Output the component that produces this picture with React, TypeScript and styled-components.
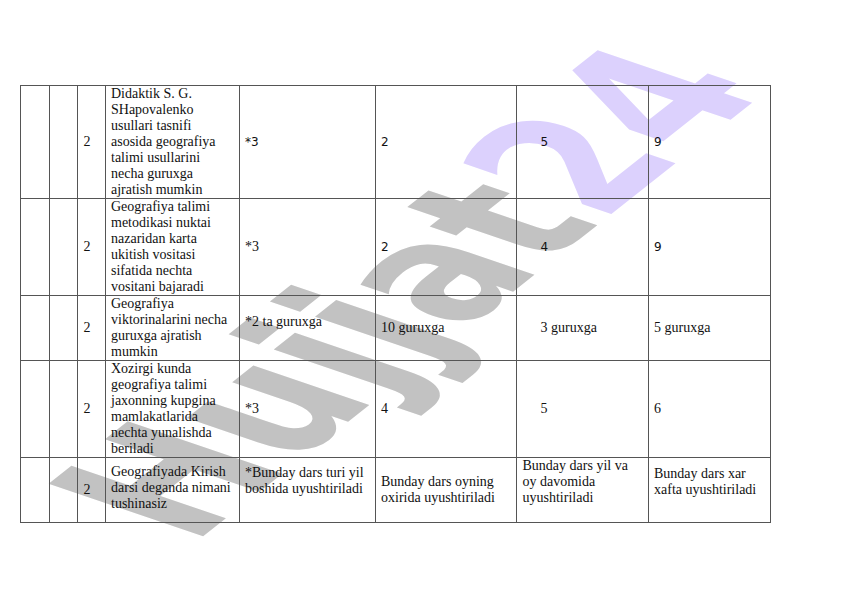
import React from "react";
import styled, { createGlobalStyle } from "styled-components";

type Answer = {
  lines: string[];
  sans?: boolean;
  indent?: number;
  lift?: number;
};

type Question = {
  height: number;
  lines: string[];
  lift?: number;
  answers: Answer[];
};

const widths = [29, 28, 27.5, 134, 136, 141.5, 131.5, 122.5];

const rows: Question[] = [
  {
    height: 112,
    lines: [
      "Didaktik S. G.",
      "SHapovalenko",
      "usullari tasnifi",
      "asosida geografiya",
      "talimi usullarini",
      "necha guruxga",
      "ajratish mumkin"
    ],
    answers: [
      { lines: ["*3"], sans: true },
      { lines: ["2"], sans: true },
      { lines: ["5"], sans: true, indent: 18 },
      { lines: ["9"], sans: true }
    ]
  },
  {
    height: 97,
    lines: [
      "Geografiya talimi",
      "metodikasi nuktai",
      "nazaridan karta",
      "ukitish vositasi",
      "sifatida nechta",
      "vositani bajaradi"
    ],
    answers: [
      { lines: ["*3"] },
      { lines: ["2"], sans: true },
      { lines: ["4"], sans: true, indent: 18 },
      { lines: ["9"], sans: true }
    ]
  },
  {
    height: 63.5,
    lines: ["Geografiya", "viktorinalarini necha", "guruxga ajratish", "mumkin"],
    answers: [
      { lines: ["*2 ta guruxga"], lift: 6 },
      { lines: ["10 guruxga"] },
      { lines: ["3 guruxga"], indent: 18 },
      { lines: ["5 guruxga"] }
    ]
  },
  {
    height: 96,
    lines: [
      "Xozirgi kunda",
      "geografiya talimi",
      "jaxonning kupgina",
      "mamlakatlarida",
      "nechta yunalishda",
      "beriladi"
    ],
    answers: [
      { lines: ["*3"] },
      { lines: ["4"] },
      { lines: ["5"], indent: 18 },
      { lines: ["6"] }
    ]
  },
  {
    height: 64,
    lines: ["Geografiyada Kirish", "darsi deganda nimani", "tushinasiz"],
    lift: 2,
    answers: [
      { lines: ["*Bunday dars turi yil", "boshida uyushtiriladi"], lift: 9 },
      { lines: ["Bunday dars oyning", "oxirida uyushtiriladi"] },
      { lines: ["Bunday dars yil va", "oy davomida", "uyushtiriladi"], lift: 8 },
      { lines: ["Bunday dars xar", "xafta uyushtiriladi"], lift: 8 }
    ]
  }
];

const GlobalStyle = createGlobalStyle`
  body {
    margin: 0;
    background: #ffffff;
  }
`;

const Page = styled.div`
  position: relative;
  width: 842px;
  height: 596px;
  overflow: hidden;
  box-sizing: border-box;
  padding: 85px 0 0 20px;
  background: #ffffff;
`;

const Watermark = styled.svg`
  position: absolute;
  left: 0;
  top: 0;
  z-index: 0;
  pointer-events: none;
`;

const Sheet = styled.table`
  position: relative;
  z-index: 1;
  width: 750px;
  border-collapse: collapse;
  table-layout: fixed;
`;

const Row = styled.tr<{ $height: number }>`
  height: ${p => p.$height}px;
`;

const Cell = styled.td<{ $sans?: boolean; $indent?: number; $lift?: number }>`
  border: 1px solid #555555;
  padding: 0 4px ${p => (p.$lift ? p.$lift * 2 : 0)}px
    ${p => 5.5 + (p.$indent || 0)}px;
  vertical-align: middle;
  color: #111111;
  font-family: ${p =>
    p.$sans ? '"DejaVu Sans", sans-serif' : '"Liberation Serif", serif'};
  font-size: ${p => (p.$sans ? "12px" : "14px")};
  line-height: 16px;
  white-space: nowrap;

  &:nth-child(7) {
    border-left-color: #9a9a9a;
  }
`;

const Line = styled.span`
  display: block;
`;

function Text({ lines }: { lines: string[] }): JSX.Element {
  return (
    <>
      {lines.map(l => (
        <Line key={l}>{l}</Line>
      ))}
    </>
  );
}

export default function App(): JSX.Element {
  return (
    <Page>
      <GlobalStyle />
      <Watermark width={842} height={596} viewBox="0 0 842 596">
        <text
          transform="matrix(1.21 -0.955 2.12 0.72 192 545)"
          fontFamily='"DejaVu Sans", Verdana, sans-serif'
          fontWeight="bold"
          fontSize={100}
        >
          <tspan fill="#c2c2c2">Hujjat</tspan>
          <tspan fill="#dcd1fd">24</tspan>
        </text>
      </Watermark>
      <Sheet>
        <colgroup>
          {widths.map((w, i) => (
            <col key={i} style={{ width: w }} />
          ))}
        </colgroup>
        <tbody>
          {rows.map((r, i) => (
            <Row key={i} $height={r.height}>
              <Cell />
              <Cell />
              <Cell>2</Cell>
              <Cell $lift={r.lift}>
                <Text lines={r.lines} />
              </Cell>
              {r.answers.map((a, j) => (
                <Cell key={j} $sans={a.sans} $indent={a.indent} $lift={a.lift}>
                  <Text lines={a.lines} />
                </Cell>
              ))}
            </Row>
          ))}
        </tbody>
      </Sheet>
    </Page>
  );
}
